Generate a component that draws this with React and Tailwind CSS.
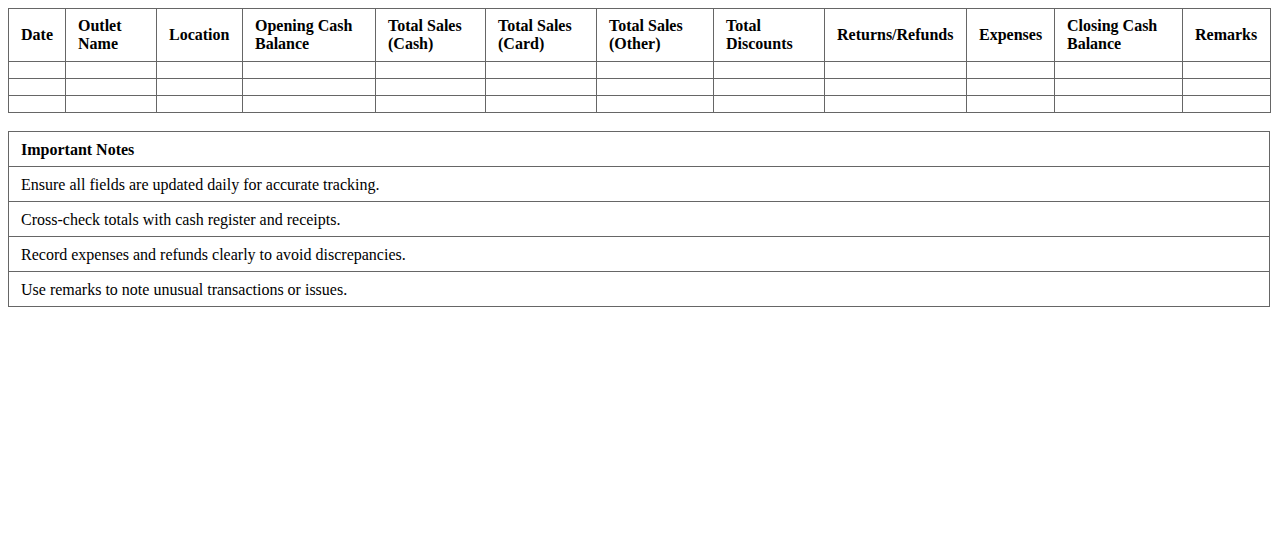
import React from "react";

const headers = [
  ["Date", 57],
  ["Outlet Name", 91],
  ["Location", 86],
  ["Opening Cash Balance", 133],
  ["Total Sales (Cash)", 110],
  ["Total Sales (Card)", 111],
  ["Total Sales (Other)", 117],
  ["Total Discounts", 111],
  ["Returns/Refunds", 142],
  ["Expenses", 88],
  ["Closing Cash Balance", 128],
  ["Remarks", 88],
];

const notes = [
  "Ensure all fields are updated daily for accurate tracking.",
  "Cross-check totals with cash register and receipts.",
  "Record expenses and refunds clearly to avoid discrepancies.",
  "Use remarks to note unusual transactions or issues.",
];

export default function App() {
  return (
    <div
      className="p-2 bg-white text-black min-h-[550px]"
      style={{ fontFamily: '"Liberation Serif", "Times New Roman", serif' }}
    >
      <table className="w-full border-collapse table-fixed text-[16px]">
        <colgroup>
          {headers.map(([h, w]) => (
            <col key={h} style={{ width: w }} />
          ))}
        </colgroup>
        <thead>
          <tr>
            {headers.map(([h]) => (
              <th
                key={h}
                className="border border-[#666] px-3 py-2 text-left font-bold leading-[18px] align-middle"
              >
                {h}
              </th>
            ))}
          </tr>
        </thead>
        <tbody>
          {[0, 1, 2].map((r) => (
            <tr key={r}>
              {headers.map(([h]) => (
                <td key={h} className="border border-[#666] px-3 py-2 h-[17px]"></td>
              ))}
            </tr>
          ))}
        </tbody>
      </table>

      <div className="mt-[18px] border border-[#666] text-[16px] leading-[18px]">
        <div className="px-3 pt-[2px] font-bold border-b border-[#666] h-[35px] flex items-center">
          Important Notes
        </div>
        {notes.map((n, i) =>
          i < notes.length - 1 ? (
            <div
              key={n}
              className="px-3 pt-[2px] h-[35px] flex items-center border-b border-[#666]"
            >
              {n}
            </div>
          ) : (
            <div key={n} className="px-3 pt-[2px] h-[34px] flex items-center">
              {n}
            </div>
          )
        )}
      </div>
    </div>
  );
}
